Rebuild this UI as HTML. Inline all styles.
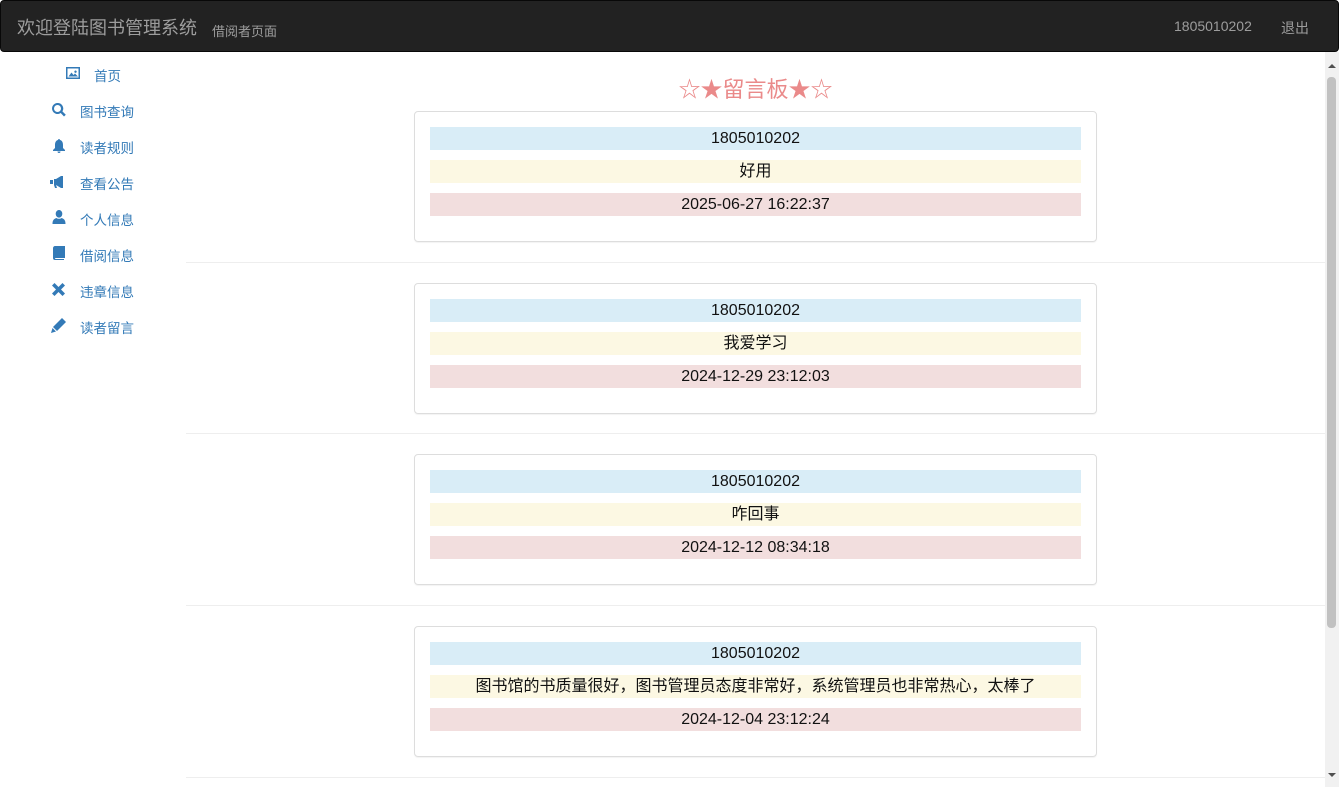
<!DOCTYPE html>
<html><head><meta charset="utf-8"><style>
*{box-sizing:border-box}
body{margin:0;width:1339px;height:787px;overflow:hidden;background:#fff;font-family:"Liberation Sans","Noto Sans CJK SC",sans-serif;position:relative}
.nav{position:absolute;left:0;top:0;width:1339px;height:52px;background:#222;border:1px solid #080808;border-radius:4px}
.brand{position:absolute;left:16px;top:13px;font-size:18px;color:#9d9d9d}
.sub{position:absolute;left:211px;top:20px;font-size:13px;color:#9d9d9d}
.nr{position:absolute;top:17px;font-size:14px;color:#9d9d9d}
.side a{position:absolute;font-size:13.5px;color:#337ab7;text-decoration:none}
.side svg{position:absolute;fill:#337ab7}
.title{position:absolute;left:186px;width:1139px;top:72px;text-align:center;font-size:22px;color:#ea8a8a}
.card{position:absolute;left:414px;width:683px;height:131px;border:1px solid #ddd;border-radius:4px;box-shadow:0 1px 1px rgba(0,0,0,.05)}
.r{position:absolute;left:15px;width:651px;height:23px;line-height:23px;text-align:center;font-size:16px;color:#111}
.hr{position:absolute;left:186px;width:1139px;height:1px;background:#eee}
.sb{position:absolute;left:1325px;top:52px;width:14px;height:735px;background:#f1f1f1}
.th{position:absolute;left:1327px;top:77px;width:9px;height:551px;background:#c1c1c1;border-radius:4px}
</style></head><body>
<div class="nav"><span class="brand">欢迎登陆图书管理系统</span><span class="sub">借阅者页面</span>
<span class="nr" style="left:1173px">1805010202</span><span class="nr" style="left:1280px">退出</span></div>
<div class="side">
<svg style="left:66px;top:67px" width="14" height="12" viewBox="0 0 14 12"><path d="M0 0h14v12H0z M1.5 1.5v9h11v-9z M2.5 9.5l3-4 2 2.5 1.5-1.5 3 3z M9.5 3.5a1.2 1.2 0 1 0 .01 0z"/></svg>
<a style="left:94px;top:65px">首页</a>
<svg style="left:52px;top:103px" width="14" height="14" viewBox="0 0 14 14"><path d="M5.5 0a5.5 5.5 0 1 0 3.2 10l3.3 3.5 1.8-1.8-3.4-3.3A5.5 5.5 0 0 0 5.5 0zm0 2a3.5 3.5 0 1 1 0 7 3.5 3.5 0 0 1 0-7z"/></svg>
<a style="left:80px;top:101px">图书查询</a>
<svg style="left:53px;top:139px" width="12" height="14" viewBox="0 0 12 14"><path d="M6 0c-.6 0-1 .5-1 1C2.5 1.6 2 4 2 6v3L0 11v1h12v-1l-2-2V6c0-2-.5-4.4-3-5 0-.5-.4-1-1-1zM4.5 12.5a1.5 1.5 0 0 0 3 0z"/></svg>
<a style="left:80px;top:137px">读者规则</a>
<svg style="left:50px;top:176px" width="16" height="12" viewBox="0 0 16 12"><path d="M11 0h2v12h-2L6 9H4V3h2zM0 4h3v4H0zM4 9h2l1 3H5z"/></svg>
<a style="left:80px;top:173px">查看公告</a>
<svg style="left:52px;top:210px" width="14" height="14" viewBox="0 0 14 14"><path d="M7 0a3.3 3.8 0 1 0 .01 0zM4.5 8C1.5 9 .5 10.5.5 14h13c0-3.5-1-5-4-6-1 1-4 1-5 0z"/></svg>
<a style="left:80px;top:209px">个人信息</a>
<svg style="left:53px;top:246px" width="12" height="14" viewBox="0 0 12 14"><path d="M2 0h10v12H2.5c-.5 0-.5 1 0 1H11v1H2c-1 0-2-.5-2-2V2c0-1 1-2 2-2z"/></svg>
<a style="left:80px;top:245px">借阅信息</a>
<svg style="left:52px;top:283px" width="13" height="13" viewBox="0 0 13 13"><path d="M2.5 0L6.5 4 10.5 0 13 2.5 9 6.5 13 10.5 10.5 13 6.5 9 2.5 13 0 10.5 4 6.5 0 2.5z"/></svg>
<a style="left:80px;top:281px">违章信息</a>
<svg style="left:51px;top:318px" width="15" height="15" viewBox="0 0 15 15"><path d="M11 0l4 4-9 9-4-4zM1.5 10l3.5 3.5L0 15z"/></svg>
<a style="left:80px;top:317px">读者留言</a>
</div>
<div class="title">☆★留言板★☆</div>

<div class="card" style="top:111px"><div class="r" style="top:15px;background:#d9edf7">1805010202</div><div class="r" style="top:48px;background:#fcf8e3">好用</div><div class="r" style="top:81px;background:#f2dede">2025-06-27 16:22:37</div></div>
<div class="hr" style="top:262px"></div>
<div class="card" style="top:283px"><div class="r" style="top:15px;background:#d9edf7">1805010202</div><div class="r" style="top:48px;background:#fcf8e3">我爱学习</div><div class="r" style="top:81px;background:#f2dede">2024-12-29 23:12:03</div></div>
<div class="hr" style="top:433px"></div>
<div class="card" style="top:454px"><div class="r" style="top:15px;background:#d9edf7">1805010202</div><div class="r" style="top:48px;background:#fcf8e3">咋回事</div><div class="r" style="top:81px;background:#f2dede">2024-12-12 08:34:18</div></div>
<div class="hr" style="top:605px"></div>
<div class="card" style="top:626px"><div class="r" style="top:15px;background:#d9edf7">1805010202</div><div class="r" style="top:48px;background:#fcf8e3">图书馆的书质量很好，图书管理员态度非常好，系统管理员也非常热心，太棒了</div><div class="r" style="top:81px;background:#f2dede">2024-12-04 23:12:24</div></div>
<div class="hr" style="top:777px"></div>
<div class="sb"></div><div class="th"></div>
<svg style="position:absolute;left:1328px;top:63px" width="8" height="6"><path d="M0 5L4 1 8 5z" fill="#505050"/></svg>
<svg style="position:absolute;left:1328px;top:772px" width="8" height="6"><path d="M0 1L4 5 8 1z" fill="#505050"/></svg>
</body></html>
